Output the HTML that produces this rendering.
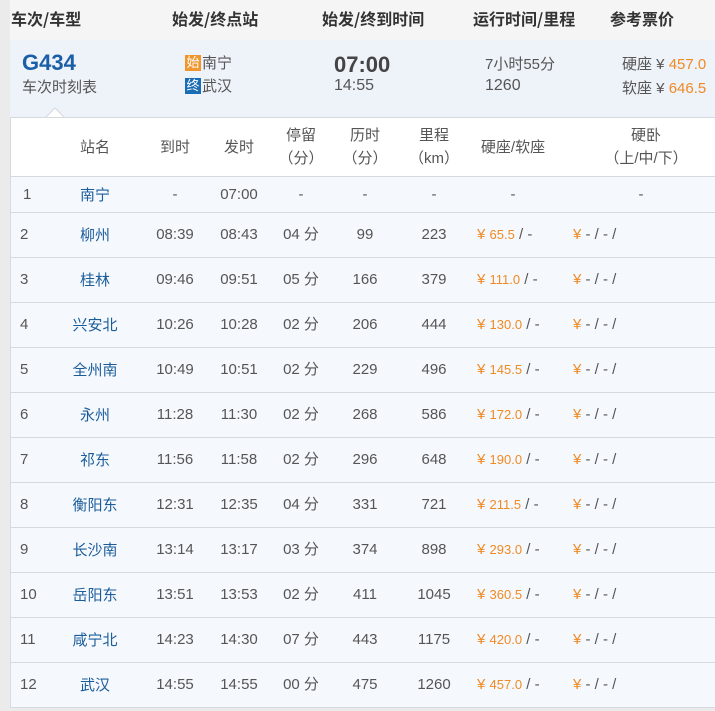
<!DOCTYPE html>
<html><head><meta charset="utf-8"><style>
*{margin:0;padding:0;box-sizing:border-box}
body{width:715px;height:711px;overflow:hidden;background:#fff;font-family:"Liberation Sans","Noto Sans CJK SC",sans-serif;font-size:15px;color:#555;position:relative}
.strip{position:absolute;left:0;top:0;width:10px;height:711px;background:#ebebeb}
.hdr{position:absolute;left:10px;top:0;width:705px;height:40px;background:#f5f5f5}
.hdr span{position:absolute;top:0;line-height:36px;font-weight:bold;color:#333;font-size:16px;font-family:"Noto Sans CJK SC",sans-serif}
.sum{position:absolute;left:10px;top:40px;width:705px;height:77px;background:#eef2f9}
.abs{position:absolute;white-space:nowrap}
.tbl{position:absolute;left:10px;top:117px;width:705px;height:591px;border-top:1px solid #d6d9de;border-left:1px solid #d6d9de;border-bottom:1px solid #d6d9de}
.th{position:absolute;left:0;top:0;width:705px;height:59px;background:#fff;border-bottom:1px solid #d6d9de}
.row{position:absolute;left:0;width:705px;height:45px;background:#f5f9fd;border-bottom:1px solid #d6d9de;line-height:44px}
.row div{top:0}
.c{position:absolute;text-align:center;white-space:nowrap}
.st{color:#1b5c9a;font-family:"Noto Sans CJK SC",sans-serif}
.o{color:#f08a24}
.bot{position:absolute;left:10px;top:708px;width:705px;height:3px;background:#ebebeb}
</style></head><body>
<div class="strip"></div>
<div class="hdr">
<span style="left:1px">车次/车型</span>
<span style="left:162px">始发/终点站</span>
<span style="left:312px">始发/终到时间</span>
<span style="left:463px">运行时间/里程</span>
<span style="left:600px">参考票价</span>
</div>
<div class="sum">
<div class="abs" style="left:12px;top:10px;font-size:22px;font-weight:bold;color:#1a5ea8">G434</div>
<div class="abs" style="left:12px;top:36px;font-size:15px;color:#555">车次时刻表</div>
<div class="abs" style="left:175px;top:15px;width:16px;height:16px;background:#f0962c;color:#fff;font-size:13px;line-height:16px;text-align:center">始</div>
<div class="abs" style="left:192px;top:12px;font-size:15px">南宁</div>
<div class="abs" style="left:175px;top:38px;width:16px;height:16px;background:#1a6cb5;color:#fff;font-size:13px;line-height:16px;text-align:center">终</div>
<div class="abs" style="left:192px;top:35px;font-size:15px">武汉</div>
<div class="abs" style="left:324px;top:12px;font-size:22px;font-weight:bold;color:#444">07:00</div>
<div class="abs" style="left:324px;top:37px;font-size:16px">14:55</div>
<div class="abs" style="left:475px;top:13px;font-size:15px">7小时55分</div>
<div class="abs" style="left:475px;top:37px;font-size:16px">1260</div>
<div class="abs" style="left:612px;top:13px;font-size:15px">硬座 ¥ <span class="o">457.0</span></div>
<div class="abs" style="left:612px;top:37px;font-size:15px">软座 ¥ <span class="o">646.5</span></div>
</div>
<svg class="abs" style="left:45px;top:107px" width="20" height="11"><polygon points="0,11 10,1 20,11" fill="#fff" stroke="#d6d9de"/><rect x="0" y="10" width="20" height="2" fill="#fff"/></svg>
<div class="tbl">
<div class="th">
<div class="c" style="left:60px;top:18px;width:48px">站名</div>
<div class="c" style="left:140px;top:18px;width:48px">到时</div>
<div class="c" style="left:204px;top:18px;width:48px">发时</div>
<div class="c" style="left:264px;top:6px;width:52px;line-height:23px">停留<br>（分）</div>
<div class="c" style="left:328px;top:6px;width:52px;line-height:23px">历时<br>（分）</div>
<div class="c" style="left:393px;top:6px;width:60px;line-height:23px">里程<br>（km）</div>
<div class="c" style="left:457px;top:18px;width:90px">硬座/软座</div>
<div class="c" style="left:580px;top:6px;width:110px;line-height:23px">硬卧<br>（上/中/下）</div>
</div>
<div class="row" style="top:59px;height:36px;line-height:35px">
<div class="c" style="left:12px">1</div>
<div class="c st" style="left:60px;width:48px">南宁</div>
<div class="c" style="left:140px;width:48px">-</div>
<div class="c" style="left:204px;width:48px">07:00</div>
<div class="c" style="left:266px;width:48px">-</div>
<div class="c" style="left:330px;width:48px">-</div>
<div class="c" style="left:395px;width:56px">-</div>
<div class="c" style="left:462px;width:80px">-</div>
<div class="c" style="left:580px;width:100px">-</div>
</div>
</div>
<div class="bot"></div>
<script>
var d=[["2","柳州","08:39","08:43","04","99","223","65.5"],["3","桂林","09:46","09:51","05","166","379","111.0"],["4","兴安北","10:26","10:28","02","206","444","130.0"],["5","全州南","10:49","10:51","02","229","496","145.5"],["6","永州","11:28","11:30","02","268","586","172.0"],["7","祁东","11:56","11:58","02","296","648","190.0"],["8","衡阳东","12:31","12:35","04","331","721","211.5"],["9","长沙南","13:14","13:17","03","374","898","293.0"],["10","岳阳东","13:51","13:53","02","411","1045","360.5"],["11","咸宁北","14:23","14:30","07","443","1175","420.0"],["12","武汉","14:55","14:55","00","475","1260","457.0"]];
var h="";
d.forEach(function(r,i){var t=95+i*45;
h+='<div class="row" style="top:'+t+'px">'+
'<div class="abs" style="left:9px">'+r[0]+'</div>'+
'<div class="c st" style="left:50px;width:68px">'+r[1]+'</div>'+
'<div class="c" style="left:138px;width:52px">'+r[2]+'</div>'+
'<div class="c" style="left:202px;width:52px">'+r[3]+'</div>'+
'<div class="c" style="left:264px;width:52px">'+r[4]+' 分</div>'+
'<div class="c" style="left:330px;width:48px">'+r[5]+'</div>'+
'<div class="c" style="left:395px;width:56px">'+r[6]+'</div>'+
'<div class="abs" style="left:466px"><span class="o">¥ <span style="font-size:13px">'+r[7]+'</span></span> / -</div>'+
'<div class="abs" style="left:562px"><span class="o">¥</span> - / - /</div>'+
'</div>';});
document.querySelector('.tbl').insertAdjacentHTML('beforeend',h);
</script>
</body></html>
